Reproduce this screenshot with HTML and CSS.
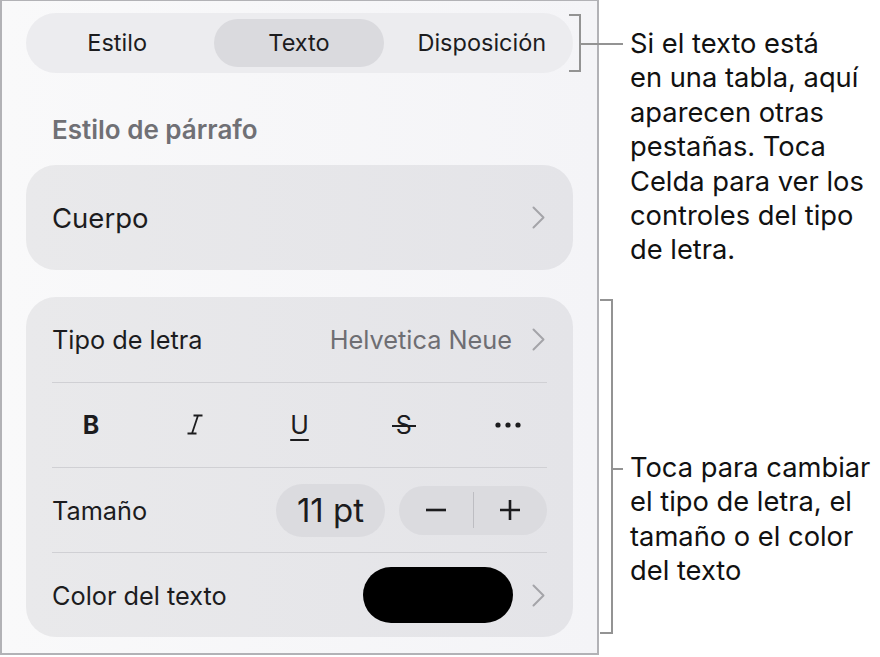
FILE: index.html
```html
<!DOCTYPE html>
<html lang="es">
<head>
    <meta charset="UTF-8">
    <meta name="viewport" content="width=device-width, initial-scale=1.0">
    <title>Formato de texto</title>
    <link rel="stylesheet" href="styles.css">
</head>
<body>

<div class="page">
    <section class="panel">
        <nav class="tabs">
            <span class="tab">Estilo</span>
            <span class="tab active">Texto</span>
            <span class="tab">Disposición</span>
        </nav>

        <h2 class="section-title">Estilo de párrafo</h2>

        <div class="card style-card">
            <span class="style-name">Cuerpo</span>
            <svg class="chevron" width="13" height="23" viewBox="0 0 13 23"><polyline points="1.5,1.5 11.5,11.5 1.5,21.5" /></svg>
        </div>

        <div class="card font-card">
            <div class="row">
                <span class="label">Tipo de letra</span>
                <span class="value">Helvetica Neue</span>
                <svg class="chevron" width="13" height="23" viewBox="0 0 13 23"><polyline points="1.5,1.5 11.5,11.5 1.5,21.5" /></svg>
            </div>

            <div class="row format-row">
                <span class="fmt fmt-bold">B</span>
                <span class="fmt">
                    <svg width="18" height="21" viewBox="0 0 18 21"><path d="M7.5 1.5h9M1.5 19.5h9M12 1.5L6 19.5" /></svg>
                </span>
                <span class="fmt fmt-underline">U</span>
                <span class="fmt fmt-strike">S</span>
                <span class="fmt">
                    <svg class="dots" width="26" height="6" viewBox="0 0 26 6"><circle cx="3" cy="3" r="2.6" /><circle cx="13" cy="3" r="2.6" /><circle cx="23" cy="3" r="2.6" /></svg>
                </span>
            </div>

            <div class="row">
                <span class="label">Tamaño</span>
                <span class="size-field">11 pt</span>
                <span class="stepper">
                    <span class="step">
                        <svg width="22" height="22" viewBox="0 0 22 22"><path d="M1 11h20" /></svg>
                    </span>
                    <i class="step-sep"></i>
                    <span class="step">
                        <svg width="22" height="22" viewBox="0 0 22 22"><path d="M1 11h20M11 1v20" /></svg>
                    </span>
                </span>
            </div>

            <div class="row">
                <span class="label">Color del texto</span>
                <span class="swatch"></span>
                <svg class="chevron" width="13" height="23" viewBox="0 0 13 23"><polyline points="1.5,1.5 11.5,11.5 1.5,21.5" /></svg>
            </div>
        </div>
    </section>

    <aside class="notes">
        <p class="note note-tabs">Si el texto está<br>en una tabla, aquí<br>aparecen otras<br>pestañas. Toca<br>Celda para ver los<br>controles del tipo<br>de letra.</p>
        <p class="note note-font">Toca para cambiar<br>el tipo de letra, el<br>tamaño o el color<br>del texto</p>
    </aside>

    <!-- callout brackets -->
    <span class="bracket bracket-tabs"></span>
    <span class="bracket bracket-font"></span>
</div>

</body>
</html>
```

FILE: styles.css
```css
body {
    margin: 0;
    background: #fff;
    font-family: 'Inter', 'Liberation Sans', sans-serif;
    color: #1c1c1e;
}
.page {
    position: relative;
    display: flex;
    width: 880px;
    height: 657px;
}
.panel {
    box-sizing: border-box;
    width: 599px;
    height: 655px;
    padding: 12px 24px 0;
    border: 2px solid #b2b2b6;
    border-top-width: 1px;
    background: linear-gradient(90deg, #f9f9fa, #f4f4f7);
}

/* segmented control */
.tabs {
    display: grid;
    grid-template-columns: repeat(3, 1fr);
    align-items: center;
    height: 60px;
    border-radius: 30px;
    background: #ececef;
}
.tab {
    height: 48px;
    line-height: 48px;
    text-align: center;
    font-size: 23.5px;
}
.tab.active {
    margin: 0 7px 0 6px;
    border-radius: 24px;
    background: #dadade;
}

.section-title {
    margin: 43px 0 21px 26px;
    font-size: 26px;
    line-height: 28px;
    font-weight: 600;
    color: #707075;
}

.card {
    border-radius: 30px;
    background: linear-gradient(90deg, #e9e9eb, #e4e4e8);
}
.style-card {
    display: flex;
    align-items: center;
    height: 105px;
    padding: 0 28px 0 26px;
}
.style-name {
    flex: 1;
    font-size: 27.5px;
}
.chevron {
    fill: none;
    stroke: #a4a4a9;
    stroke-width: 2;
    stroke-linecap: round;
    stroke-linejoin: round;
}

.font-card {
    margin-top: 27px;
    padding: 0 26px;
}
.row {
    display: flex;
    align-items: center;
    height: 85px;
    box-sizing: border-box;
}
.row + .row {
    border-top: 1px solid #d0d0d4;
}
.row .chevron {
    margin-right: 2px;
}
.label {
    flex: 1;
    font-size: 25.3px;
}
.value {
    margin-right: 20px;
    font-size: 25.3px;
    color: #6e6e73;
}

/* bold / italic / underline / strike / more */
.row.format-row {
    display: grid;
    grid-template-columns: repeat(5, 1fr);
    margin: 0 -13px;
    border-top: none;
    box-shadow: inset 0 1px 0 #d0d0d4;
    clip-path: inset(0 13px);
}
.fmt {
    display: flex;
    justify-content: center;
    align-items: center;
    font-size: 25px;
}
.fmt svg {
    fill: none;
    stroke: #1c1c1e;
    stroke-width: 1.8;
}
.fmt .dots {
    fill: #1c1c1e;
    stroke: none;
}
.fmt-bold {
    font-weight: 700;
}
.fmt-underline {
    text-decoration: underline;
    text-decoration-thickness: 2px;
    text-underline-offset: 5px;
}
.fmt-strike {
    position: relative;
}
.fmt-strike::after {
    content: "";
    position: absolute;
    left: calc(50% - 12px);
    top: 50%;
    width: 24px;
    height: 2px;
    background: #1c1c1e;
}

.size-field {
    width: 109px;
    height: 53px;
    margin-right: 14px;
    border-radius: 27px;
    background: #dbdbdf;
    font-size: 33px;
    line-height: 53px;
    text-align: center;
}
.stepper {
    display: flex;
    align-items: center;
    width: 148px;
    height: 49px;
    border-radius: 25px;
    background: #dbdbdf;
}
.step {
    flex: 1;
    display: flex;
    justify-content: center;
}
.step svg {
    fill: none;
    stroke: #1c1c1e;
    stroke-width: 2.6;
}
.step-sep {
    width: 1px;
    height: 36px;
    background: #bdbdc2;
}
.swatch {
    width: 150px;
    height: 56px;
    margin-right: 19px;
    border-radius: 28px;
    background: #000;
}

/* callouts */
.notes {
    padding: 27px 0 0 31px;
}
.note {
    margin: 0;
    font-size: 27.3px;
    line-height: 34.4px;
    color: #111;
}
.note-font {
    margin-top: 183px;
}
.bracket {
    position: absolute;
    box-sizing: border-box;
    border: 2px solid #939393;
    border-left: none;
}
.bracket::after {
    content: "";
    position: absolute;
    left: 100%;
    height: 2px;
    background: #939393;
}
.bracket-tabs {
    left: 569px;
    top: 14px;
    width: 12px;
    height: 58px;
}
.bracket-tabs::after {
    top: 27px;
    width: 44px;
}
.bracket-font {
    left: 600px;
    top: 299px;
    width: 13px;
    height: 335px;
}
.bracket-font::after {
    top: 167px;
    width: 12px;
}
```
